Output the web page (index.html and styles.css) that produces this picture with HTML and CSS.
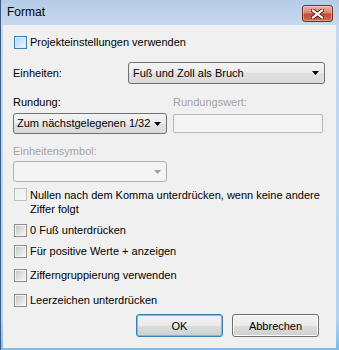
FILE: index.html
```html
<!DOCTYPE html>
<html lang="de">
<head>
<meta charset="UTF-8" />
<title>Format</title>
<link rel="stylesheet" href="styles.css">
</head>
<body>
<div class="window">

  <div class="titlebar">
    <span class="title">Format</span>
    <button class="close-btn" title="Schließen">
      <svg width="13" height="10" viewBox="0 0 13 10">
        <path d="M2 1.5 L11 8.5 M11 1.5 L2 8.5" stroke="#5a1a14" stroke-width="4" stroke-linecap="square"/>
        <path d="M2 1.5 L11 8.5 M11 1.5 L2 8.5" stroke="#fff" stroke-width="2.2" stroke-linecap="square"/>
      </svg>
    </button>
  </div>

  <div class="client">

    <label class="check">
      <span class="box box-hot"></span>Projekteinstellungen verwenden
    </label>

    <div class="units-row">
      <span class="units-label">Einheiten:</span>
      <div class="combo combo-wide">
        <span>Fuß und Zoll als Bruch</span>
        <svg class="arrow" width="7" height="4" viewBox="0 0 7 4"><path d="M0 0 H7 L3.5 4 Z" fill="#000"/></svg>
      </div>
    </div>

    <div class="round-grid">
      <span>Rundung:</span>
      <span class="off">Rundungswert:</span>
      <div class="combo">
        <span>Zum nächstgelegenen 1/32</span>
        <svg class="arrow" width="7" height="4" viewBox="0 0 7 4"><path d="M0 0 H7 L3.5 4 Z" fill="#000"/></svg>
      </div>
      <div class="textbox"></div>
    </div>

    <span class="off symbol-label">Einheitensymbol:</span>
    <div class="combo combo-off">
      <span></span>
      <svg class="arrow" width="7" height="4" viewBox="0 0 7 4"><path d="M0 0 H7 L3.5 4 Z" fill="#a0a0a0"/></svg>
    </div>

    <label class="check check-multi">
      <span class="box box-off"></span>
      <span class="multi-text">Nullen nach dem Komma unterdrücken, wenn keine andere Ziffer folgt</span>
    </label>

    <label class="check gap-8">
      <span class="box"></span>0 Fuß unterdrücken
    </label>
    <label class="check gap-8">
      <span class="box"></span>Für positive Werte + anzeigen
    </label>
    <label class="check gap-11">
      <span class="box"></span>Zifferngruppierung verwenden
    </label>
    <label class="check gap-12">
      <span class="box"></span>Leerzeichen unterdrücken
    </label>

    <div class="button-row">
      <button class="btn btn-default">OK</button>
      <button class="btn">Abbrechen</button>
    </div>

  </div>
</div>
</body>
</html>
```

FILE: styles.css
```css
body{margin:0;font-family:"Liberation Sans",Arial,sans-serif;font-size:11px;color:#000}
.window{width:339px;height:350px;box-sizing:border-box;display:flex;flex-direction:column;
        background:linear-gradient(#b5cce8,#c6d9ef 25px,#b4d2ee 320px,#7fbbe4);border-left:1px solid #3d5d86}

/* titelleiste */
.titlebar{height:25px;flex:none;display:flex;justify-content:space-between;align-items:flex-start;
          padding:0 6px;box-sizing:border-box}
.title{font-size:12px;line-height:14px;margin-top:5px;color:#000}
.close-btn{width:31px;height:17px;margin-top:5px;padding:0;border:1px solid #7a2a20;border-radius:3px;
           background:linear-gradient(#eab0a3,#d98372 45%,#c44a36 55%,#d36a52);
           box-shadow:inset 0 0 0 1px rgba(255,255,255,.35);display:flex;align-items:center;justify-content:center}
.close-btn svg{display:block}

/* inhalt */
.client{flex:1;margin:0 3px 2px 2px;background:#f0f0f0;padding:11px 11px 0 10px;
        display:flex;flex-direction:column;align-items:flex-start}
.off{color:#a5a5a5}

.check{display:flex;align-items:center;height:13px;line-height:13px;margin-left:1px;white-space:nowrap}
.box{flex:none;width:13px;height:13px;box-sizing:border-box;margin-right:3px;padding:1px;border:1px solid #8f8f8f;
     background:linear-gradient(135deg,#c8c8c8,#f5f5f5) content-box,linear-gradient(#f4f4f4,#f4f4f4) padding-box}
.box-hot{border-color:#3c7fb1;
         background:linear-gradient(135deg,#b3d6f7,#e9f4ff) content-box,linear-gradient(#dcecfb,#dcecfb) padding-box}
.box-off{border-color:#bcbcbc;
         background:linear-gradient(135deg,#ededed,#f7f7f7) content-box,linear-gradient(#f4f4f4,#f4f4f4) padding-box}
.check-multi{height:auto;align-items:flex-start;line-height:14px;margin-top:6px;white-space:normal}
.multi-text{max-width:292px}
.gap-8{margin-top:8px}
.gap-11{margin-top:11px}
.gap-12{margin-top:12px}

.units-row{display:flex;align-items:center;margin-top:13px;height:22px}
.units-label{width:115px}

.combo{height:21px;box-sizing:border-box;border:1px solid #707070;border-radius:3px;
       background:linear-gradient(#f3f3f3,#ebebeb 50%,#e1e1e1 51%,#dadada);
       display:flex;align-items:center;justify-content:space-between;padding:0 5px 0 3px;white-space:nowrap}
.combo-wide{width:197px;height:22px;padding-left:4px}
.combo-off{width:154px;margin-top:3px;border-color:#adb2b5;background:#f4f4f4}
.arrow{display:block;flex:none}

.round-grid{display:grid;grid-template-columns:154px 150px;column-gap:6px;row-gap:4px;align-items:center;
            margin-top:12px;line-height:13px}
.textbox{height:19px;box-sizing:border-box;border:1px solid #b8b8b8;border-radius:2px;background:#f4f4f4}
.symbol-label{margin-top:11px;line-height:13px}

.button-row{align-self:stretch;display:flex;justify-content:flex-end;gap:9px;margin-top:7px;padding-right:6px}
.btn{width:87px;height:23px;padding:0;font-family:inherit;font-size:11px;color:#000;border:1px solid #707070;border-radius:3px;
     background:linear-gradient(#f2f2f2,#ebebeb 50%,#dddddd 51%,#cfcfcf);box-shadow:inset 0 0 0 1px #fcfcfc}
.btn-default{border-color:#3c7fb1;box-shadow:inset 0 0 0 1px #48d0f8}
```
